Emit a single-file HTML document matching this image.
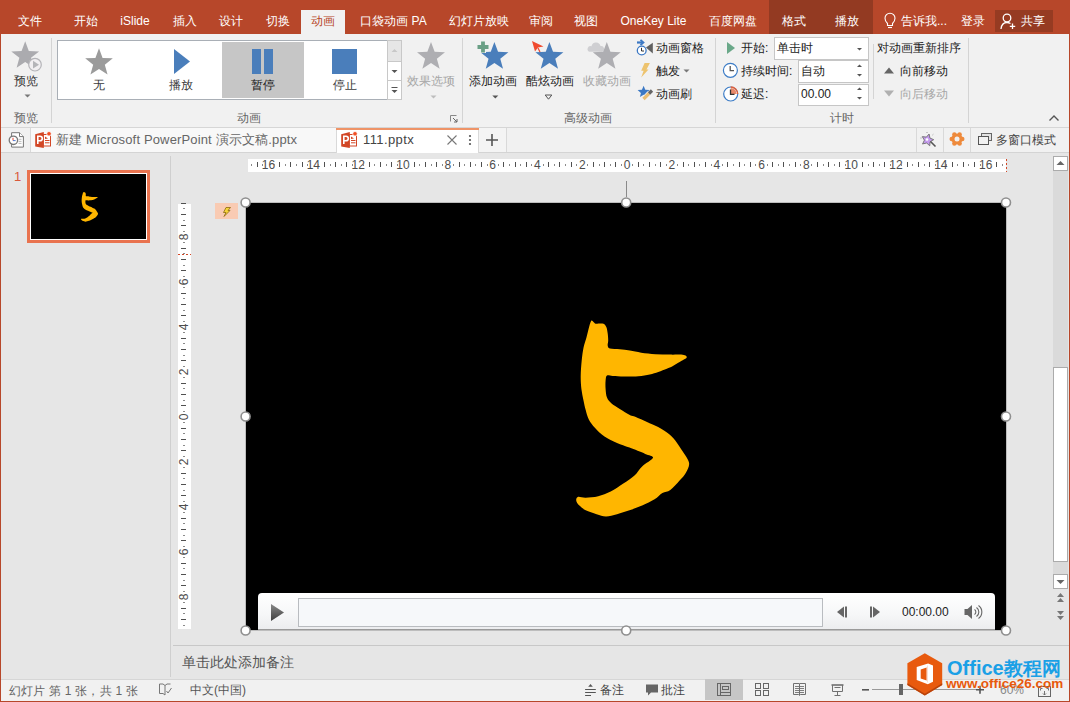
<!DOCTYPE html>
<html><head><meta charset="utf-8"><style>
html,body{margin:0;padding:0;width:1070px;height:702px;overflow:hidden;background:#E6E6E6;font-family:"Liberation Sans",sans-serif;}
.t{position:absolute;white-space:nowrap;line-height:14px;}
.tc{position:absolute;width:120px;text-align:center;white-space:nowrap;font-size:12px;line-height:14px;}
svg{overflow:visible}
</style></head><body>
<div style="position:absolute;left:0;top:0;width:1070px;height:34px;background:#B7472A"></div>
<div style="position:absolute;left:769px;top:0;width:104px;height:34px;background:#933A22"></div>
<div style="position:absolute;left:301px;top:10px;width:44px;height:24px;background:#F1F1F1"></div>
<div style="position:absolute;left:995px;top:10px;width:58px;height:22px;background:#963B22"></div>
<div class="tc" style="left:-30px;top:14px;color:#FFFFFF">文件</div>
<div class="tc" style="left:26px;top:14px;color:#FFFFFF">开始</div>
<div class="tc" style="left:75px;top:14px;color:#FFFFFF">iSlide</div>
<div class="tc" style="left:125px;top:14px;color:#FFFFFF">插入</div>
<div class="tc" style="left:171px;top:14px;color:#FFFFFF">设计</div>
<div class="tc" style="left:217.5px;top:14px;color:#FFFFFF">切换</div>
<div class="tc" style="left:262.5px;top:14px;color:#B7472A">动画</div>
<div class="tc" style="left:333.5px;top:14px;color:#FFFFFF">口袋动画 PA</div>
<div class="tc" style="left:418.5px;top:14px;color:#FFFFFF">幻灯片放映</div>
<div class="tc" style="left:481px;top:14px;color:#FFFFFF">审阅</div>
<div class="tc" style="left:526px;top:14px;color:#FFFFFF">视图</div>
<div class="tc" style="left:593.5px;top:14px;color:#FFFFFF">OneKey Lite</div>
<div class="tc" style="left:672.5px;top:14px;color:#FFFFFF">百度网盘</div>
<div class="tc" style="left:733.5px;top:14px;color:#FFFFFF">格式</div>
<div class="tc" style="left:786.5px;top:14px;color:#FFFFFF">播放</div>
<div class="tc" style="left:864px;top:14px;color:#FFFFFF">告诉我...</div>
<div class="tc" style="left:912.5px;top:14px;color:#FFFFFF">登录</div>
<div class="tc" style="left:972.5px;top:14px;color:#FFFFFF">共享</div>
<svg style="position:absolute;left:884px;top:12px" width="12" height="18" viewBox="0 0 12 18"><path d="M3.5 11.5 C2 10 1 8.5 1 6.2 A5 5 0 0 1 11 6.2 C11 8.5 10 10 8.5 11.5 L8.5 13.5 L3.5 13.5 Z" fill="none" stroke="#fff" stroke-width="1.1"/><path d="M4 15.5 H8" stroke="#fff" stroke-width="1.1"/></svg>
<svg style="position:absolute;left:1000px;top:13px" width="16" height="17" viewBox="0 0 16 17"><circle cx="7" cy="5" r="3.8" fill="none" stroke="#fff" stroke-width="1.3"/><path d="M1 16 C1.5 11.5 4 9.5 7 9.5 C8.5 9.5 9.5 10 10.5 10.5" fill="none" stroke="#fff" stroke-width="1.3"/><path d="M12.5 10.5 V16 M9.8 13.3 H15.2" stroke="#fff" stroke-width="1.3"/></svg>
<div style="position:absolute;left:1px;top:34px;width:1068px;height:93px;background:#F1F1F1"></div>
<div style="position:absolute;left:1px;top:127px;width:1068px;height:1px;background:#D6D6D6"></div>
<div style="position:absolute;left:51px;top:38px;width:1px;height:85px;background:#D4D4D4"></div>
<div style="position:absolute;left:462px;top:38px;width:1px;height:85px;background:#D4D4D4"></div>
<div style="position:absolute;left:715px;top:38px;width:1px;height:85px;background:#D4D4D4"></div>
<div style="position:absolute;left:968px;top:38px;width:1px;height:85px;background:#D4D4D4"></div>
<div style="position:absolute;left:873px;top:44px;width:1px;height:55px;background:#D4D4D4"></div>
<svg style="position:absolute;left:0;top:34px" width="50" height="70"><polygon points="25.20,7.30 28.80,16.94 39.09,17.39 31.03,23.79 33.78,33.71 25.20,28.03 16.62,33.71 19.37,23.79 11.31,17.39 21.60,16.94" fill="#ABABAF"/><circle cx="35" cy="30.7" r="6.3" fill="#F1EEF1" stroke="#B4B4B8" stroke-width="1.2"/><polygon points="33,26.8 33,34.6 39,30.7" fill="#B4B4B8"/><polygon points="24.5,60.5 30.5,60.5 27.5,63.5" fill="#777"/></svg>
<div class="tc" style="left:-34px;top:74px;color:#333">预览</div>
<div class="tc" style="left:-34px;top:111px;color:#666">预览</div>
<div style="position:absolute;left:57px;top:40px;width:330px;height:58px;background:#fff;border:1px solid #A9AFB6"></div>
<div style="position:absolute;left:222px;top:42px;width:82px;height:56px;background:#C6C6C6"></div>
<svg style="position:absolute;left:57px;top:34px" width="340" height="70"><polygon points="42.00,14.30 45.59,23.91 55.84,24.35 47.81,30.74 50.55,40.62 42.00,34.96 33.45,40.62 36.19,30.74 28.16,24.35 38.41,23.91" fill="#9B9B9B"/><polygon points="117,15 117,40 133,27.5" fill="#4A7EBB"/><rect x="195" y="15" width="9" height="25" fill="#4A7EBB"/><rect x="207" y="15" width="9" height="25" fill="#4A7EBB"/><rect x="275" y="15" width="25" height="25" fill="#4A7EBB"/></svg>
<div class="tc" style="left:39px;top:78px;color:#3A3A3A">无</div>
<div class="tc" style="left:121px;top:78px;color:#3A3A3A">播放</div>
<div class="tc" style="left:203px;top:78px;color:#1A1A1A">暂停</div>
<div class="tc" style="left:285px;top:78px;color:#3A3A3A">停止</div>
<div style="position:absolute;left:387px;top:40px;width:15px;height:22px;background:#E6E6E6;border:1px solid #C8C8C8;box-sizing:border-box"></div>
<div style="position:absolute;left:387px;top:61px;width:15px;height:20px;background:#fff;border:1px solid #C8C8C8;box-sizing:border-box"></div>
<div style="position:absolute;left:387px;top:80px;width:15px;height:20px;background:#fff;border:1px solid #C8C8C8;box-sizing:border-box"></div>
<svg style="position:absolute;left:387px;top:40px" width="15" height="60"><polygon points="4.5,12 10.5,12 7.5,9" fill="#C8C8C8"/><polygon points="4.5,30 10.5,30 7.5,33" fill="#555"/><rect x="4.5" y="47" width="6" height="1" fill="#555"/><polygon points="4.5,50 10.5,50 7.5,53" fill="#555"/></svg>
<div class="tc" style="left:189px;top:111px;color:#666">动画</div>
<svg style="position:absolute;left:410px;top:34px" width="45" height="70"><polygon points="21.00,8.10 24.63,17.81 34.98,18.26 26.87,24.71 29.64,34.69 21.00,28.97 12.36,34.69 15.13,24.71 7.02,18.26 17.37,17.81" fill="#AEAEB2"/><polygon points="20.5,61.5 26.5,61.5 23.5,64.5" fill="#BDBDBD"/></svg>
<div class="tc" style="left:371px;top:74px;color:#A6A6A6">效果选项</div>
<svg style="position:absolute;left:449px;top:114px" width="10" height="10"><path d="M1.5 7.5 V1.5 H7.5" fill="none" stroke="#888" stroke-width="1"/><path d="M4 4 L8 8 M8 5 V8 H5" fill="none" stroke="#666" stroke-width="1"/></svg>
<svg style="position:absolute;left:465px;top:34px" width="60" height="70"><polygon points="29.40,8.10 33.03,17.81 43.38,18.26 35.27,24.71 38.04,34.69 29.40,28.97 20.76,34.69 23.53,24.71 15.42,18.26 25.77,17.81" fill="#4A7EBB"/><path d="M18 7 V19 M12 13 H24" stroke="#F1F1F1" stroke-width="6"/><path d="M18 7.5 V18.5 M12.5 13 H23.5" stroke="#6A9F85" stroke-width="3.8"/><polygon points="27.3,61.5 33.3,61.5 30.3,64.5" fill="#555"/></svg>
<div class="tc" style="left:432.5px;top:74px;color:#222">添加动画</div>
<svg style="position:absolute;left:520px;top:34px" width="60" height="70"><polygon points="29.40,8.10 33.03,17.81 43.38,18.26 35.27,24.71 38.04,34.69 29.40,28.97 20.76,34.69 23.53,24.71 15.42,18.26 25.77,17.81" fill="#4A7EBB"/><path d="M12 7 L23.5 12.5 L18 13.5 L15 17.5 Z" fill="#F04A2E"/><path d="M18 14 L20 18" stroke="#F04A2E" stroke-width="1.3"/><path d="M25.2 61 H31.8 L28.5 65.2 Z" fill="none" stroke="#555" stroke-width="1"/></svg>
<div class="tc" style="left:489.5px;top:74px;color:#222">酷炫动画</div>
<svg style="position:absolute;left:580px;top:34px" width="55" height="40"><path d="M9.5 17.8 A2.8 2.8 0 0 1 11.5 12.3 A4.6 4.6 0 0 1 20.5 12 A3 3 0 0 1 22 17.8 Z" fill="#CFCFD2"/><polygon points="26.80,8.10 30.43,17.81 40.78,18.26 32.67,24.71 35.44,34.69 26.80,28.97 18.16,34.69 20.93,24.71 12.82,18.26 23.17,17.81" fill="#AEAEB2"/></svg>
<div class="tc" style="left:546.5px;top:74px;color:#A6A6A6">收藏动画</div>
<svg style="position:absolute;left:632px;top:36px" width="24" height="68"><path d="M5 6.5 H10.5" stroke="#3B78C4" stroke-width="2.2"/><path d="M8.5 3.8 L11.5 6.5 L8.5 9.2" fill="none" stroke="#3B78C4" stroke-width="1.8"/><circle cx="9.7" cy="14.5" r="4.4" fill="#fff" stroke="#3B78C4" stroke-width="1.3"/><path d="M9.5 11.8 V15 H12" fill="none" stroke="#333" stroke-width="1"/><polygon points="14,11.6 20.8,6.8 20.8,17.4" fill="#606060"/><polygon points="12.6,27.1 17.9,27.1 14.5,33.4 16.5,33.4 9.2,41.6 11.6,34.8 9.2,34.8" fill="#EDC36E"/><polygon points="11.60,49.70 13.27,53.71 17.59,54.05 14.30,56.88 15.30,61.10 11.60,58.84 7.90,61.10 8.90,56.88 5.61,54.05 9.93,53.71" fill="#3B78C4"/><path d="M11.5 63 L17.5 57" stroke="#F1F1F1" stroke-width="5"/><path d="M11.5 63 L17 57.5" stroke="#E9BE74" stroke-width="3.2"/><path d="M17 57.5 L20 54.5" stroke="#666" stroke-width="3.2"/></svg>
<div class="t" style="left:656px;top:41px;font-size:12px;color:#222;">动画窗格</div>
<div class="t" style="left:656px;top:64px;font-size:12px;color:#222;">触发</div>
<svg style="position:absolute;left:683px;top:69px" width="8" height="5"><polygon points="0.5,0.5 6.5,0.5 3.5,3.5" fill="#777"/></svg>
<div class="t" style="left:656px;top:87px;font-size:12px;color:#222;">动画刷</div>
<div class="tc" style="left:528px;top:111px;color:#666">高级动画</div>
<svg style="position:absolute;left:720px;top:38px" width="20" height="66"><polygon points="7,4 7,16 15,10" fill="#6AA889"/><circle cx="10.4" cy="32.3" r="7" fill="#fff" stroke="#3C7CC6" stroke-width="1.2"/><path d="M10.2 28 V32.6 H14" fill="none" stroke="#555" stroke-width="1.3"/><circle cx="10.7" cy="56" r="7" fill="#fff" stroke="#3C7CC6" stroke-width="1.2"/><path d="M10.7 56 V50 A6 6 0 0 1 16.7 56 Z" fill="#E8896A"/><path d="M10.7 49 A7 7 0 0 1 17.7 56" fill="none" stroke="#E0603A" stroke-width="1.3"/><path d="M10.5 51.5 V56.3 H14.5" fill="none" stroke="#333" stroke-width="1.3"/></svg>
<div class="t" style="left:741px;top:41px;font-size:12px;color:#222;">开始:</div>
<div class="t" style="left:741px;top:64px;font-size:12px;color:#222;">持续时间:</div>
<div class="t" style="left:741px;top:87px;font-size:12px;color:#222;">延迟:</div>
<div style="position:absolute;left:774px;top:37px;width:95px;height:23px;box-sizing:border-box;background:#fff;border:1px solid #C6C6C6"></div>
<div style="position:absolute;left:798px;top:60px;width:71px;height:23px;box-sizing:border-box;background:#fff;border:1px solid #C6C6C6"></div>
<div style="position:absolute;left:798px;top:84px;width:71px;height:22px;box-sizing:border-box;background:#fff;border:1px solid #C6C6C6"></div>
<div class="t" style="left:777px;top:41px;font-size:12px;color:#222;">单击时</div>
<div class="t" style="left:801px;top:64px;font-size:12px;color:#222;">自动</div>
<div class="t" style="left:801px;top:87px;font-size:12px;color:#222;">00.00</div>
<svg style="position:absolute;left:855px;top:44px" width="10" height="60"><polygon points="2,4 7,4 4.5,6.5" fill="#555"/><polygon points="2,23 7,23 4.5,20.5" fill="#555"/><polygon points="2,30 7,30 4.5,32.5" fill="#555"/><polygon points="2,46 7,46 4.5,43.5" fill="#555"/><polygon points="2,53 7,53 4.5,55.5" fill="#555"/></svg>
<div class="tc" style="left:782px;top:111px;color:#666">计时</div>
<div class="t" style="left:877px;top:41px;font-size:12px;color:#222;">对动画重新排序</div>
<svg style="position:absolute;left:882px;top:64px" width="14" height="36"><polygon points="2,9.5 12,9.5 7,3.5" fill="#666"/><polygon points="2,26.5 12,26.5 7,32.5" fill="#B0B0B0"/></svg>
<div class="t" style="left:900px;top:64px;font-size:12px;color:#222;">向前移动</div>
<div class="t" style="left:900px;top:87px;font-size:12px;color:#A6A6A6;">向后移动</div>
<svg style="position:absolute;left:1048px;top:114px" width="12" height="8"><path d="M1.5 6.5 L6 2 L10.5 6.5" fill="none" stroke="#555" stroke-width="1.4"/></svg>
<div style="position:absolute;left:1px;top:128px;width:1068px;height:24px;background:#F1F1F1"></div>
<div style="position:absolute;left:31px;top:128px;width:305px;height:24px;background:#F8F8F8"></div>
<div style="position:absolute;left:479px;top:128px;width:27px;height:24px;background:#F4F4F4"></div>
<div style="position:absolute;left:1px;top:152px;width:1068px;height:1px;background:#D4D4D4"></div>
<div style="position:absolute;left:30px;top:128px;width:1px;height:24px;background:#D9D9D9"></div>
<div style="position:absolute;left:506px;top:128px;width:1px;height:24px;background:#D9D9D9"></div>
<div style="position:absolute;left:916px;top:128px;width:1px;height:24px;background:#D9D9D9"></div>
<div style="position:absolute;left:943px;top:128px;width:1px;height:24px;background:#D9D9D9"></div>
<div style="position:absolute;left:970px;top:128px;width:1px;height:24px;background:#D9D9D9"></div>
<div style="position:absolute;left:336px;top:128px;width:143px;height:25px;background:#FFFFFF;border-left:1px solid #D9D9D9;border-right:1px solid #D9D9D9;box-sizing:border-box"></div>
<div style="position:absolute;left:336px;top:128px;width:143px;height:2px;background:#EF9468"></div>
<svg style="position:absolute;left:34px;top:131px" width="18" height="17" viewBox="0 0 18 17"><rect x="9.2" y="3.5" width="7.3" height="11.5" fill="#fff" stroke="#D24726" stroke-width="1"/><path d="M11 9.5 H15.5 M11 11.8 H15.5" stroke="#D24726" stroke-width="1"/><path d="M11 5.5 L14 7.5 L11 8" fill="#D24726"/><path d="M1.2 3.3 L9.8 0.9 V16.9 L1.2 15.6 Z" fill="#D24726"/><path d="M3.8 13 V5.2 H6 A2.3 2.3 0 0 1 6 9.8 H3.8" fill="none" stroke="#fff" stroke-width="1.6"/><circle cx="15" cy="2.8" r="2.3" fill="#F04E23" stroke="#fff" stroke-width="0.8"/></svg>
<svg style="position:absolute;left:340px;top:131px" width="18" height="17" viewBox="0 0 18 17"><rect x="9.2" y="3.5" width="7.3" height="11.5" fill="#fff" stroke="#D24726" stroke-width="1"/><path d="M11 9.5 H15.5 M11 11.8 H15.5" stroke="#D24726" stroke-width="1"/><path d="M11 5.5 L14 7.5 L11 8" fill="#D24726"/><path d="M1.2 3.3 L9.8 0.9 V16.9 L1.2 15.6 Z" fill="#D24726"/><path d="M3.8 13 V5.2 H6 A2.3 2.3 0 0 1 6 9.8 H3.8" fill="none" stroke="#fff" stroke-width="1.6"/><circle cx="15" cy="2.8" r="2.3" fill="#F04E23" stroke="#fff" stroke-width="0.8"/></svg>
<svg style="position:absolute;left:8px;top:131px" width="18" height="18" viewBox="0 0 18 18"><path d="M3.6 1.7 H11.5 L15.4 5.6 V16.1 H3.6 Z" fill="#fff" stroke="#777" stroke-width="1"/><path d="M11.5 1.7 V5.6 H15.4" fill="#fff" stroke="#777" stroke-width="1"/><path d="M10.5 8.3 H13.5 M10.5 10.4 H13.5 M10.5 12.4 H13.5" stroke="#AAA" stroke-width="0.8"/><circle cx="5.4" cy="9.3" r="4.2" fill="#fff" stroke="#777" stroke-width="1.3"/><path d="M5 6.8 V9.6" stroke="#E0301E" stroke-width="0.9"/><path d="M5 9.6 H7.6" stroke="#3B6FD0" stroke-width="0.9"/></svg>
<div class="t" style="left:56px;top:133px;font-size:13px;color:#666;letter-spacing:0.15px">新建 Microsoft PowerPoint 演示文稿.pptx</div>
<div class="t" style="left:363px;top:133px;font-size:13px;color:#444;letter-spacing:0.4px">111.pptx</div>
<svg style="position:absolute;left:446px;top:134px" width="30" height="12"><path d="M1.5 1.5 L10.5 10.5 M10.5 1.5 L1.5 10.5" stroke="#777" stroke-width="1.1"/><circle cx="24" cy="2" r="1.1" fill="#555"/><circle cx="24" cy="6" r="1.1" fill="#555"/><circle cx="24" cy="10" r="1.1" fill="#555"/></svg>
<svg style="position:absolute;left:485px;top:133px" width="14" height="14"><path d="M7 1 V13 M1 7 H13" stroke="#555" stroke-width="1.6"/></svg>
<svg style="position:absolute;left:920px;top:131px" width="18" height="18"><polygon points="9.10,3.01 9.91,7.05 13.69,8.68 10.10,10.69 9.72,14.79 6.70,11.99 2.68,12.90 4.40,9.16 2.30,5.62 6.39,6.11" fill="#C59BEF" stroke="#6E6E6E" stroke-width="0.9" stroke-linejoin="round"/><circle cx="7" cy="8.5" r="1.3" fill="#fff"/><path d="M10.5 10.5 L15.5 15.5" stroke="#555" stroke-width="1.6"/><path d="M7 1 V2 M12.5 4 L13.3 3.3 M0.5 7 H1.5 M2 13 L3 12.5" stroke="#888" stroke-width="0.8"/></svg>
<svg style="position:absolute;left:949px;top:131px" width="16" height="16"><circle cx="8" cy="8" r="5.6" fill="#EE8A3C"/><circle cx="13.30" cy="8.00" r="2.2" fill="#EE8A3C"/><circle cx="10.65" cy="12.59" r="2.2" fill="#EE8A3C"/><circle cx="5.35" cy="12.59" r="2.2" fill="#EE8A3C"/><circle cx="2.70" cy="8.00" r="2.2" fill="#EE8A3C"/><circle cx="5.35" cy="3.41" r="2.2" fill="#EE8A3C"/><circle cx="10.65" cy="3.41" r="2.2" fill="#EE8A3C"/><circle cx="8" cy="8" r="2.5" fill="#F1F1F1"/></svg>
<svg style="position:absolute;left:977px;top:132px" width="16" height="14"><rect x="4.5" y="1.5" width="10" height="7" fill="#E2E2E2" stroke="#666" stroke-width="1"/><rect x="1.5" y="4.5" width="10" height="8" fill="#F1F1F1" stroke="#555" stroke-width="1"/></svg>
<div class="t" style="left:996px;top:133px;font-size:12px;color:#444;">多窗口模式</div>
<div style="position:absolute;left:1px;top:153px;width:1068px;height:525px;background:#E6E6E6"></div>
<div style="position:absolute;left:170px;top:156px;width:1px;height:521px;background:#CFCFCF"></div>
<div style="position:absolute;left:173px;top:645px;width:896px;height:1px;background:#C8C8C8"></div>
<div style="position:absolute;left:27px;top:170px;width:123px;height:73px;background:#E9734F"></div>
<div style="position:absolute;left:30px;top:173px;width:117px;height:67px;background:#fff"></div>
<div style="position:absolute;left:31px;top:174px;width:115px;height:65px;background:#000"></div>
<div class="t" style="left:14px;top:170px;font-size:13px;color:#D9583B;">1</div>
<div style="position:absolute;left:248px;top:159px;width:758px;height:13px;background:#fff"></div>
<div style="position:absolute;left:178px;top:204px;width:13px;height:425px;background:#fff"></div>
<svg style="position:absolute;left:0;top:0" width="1070" height="702"><rect x="251" y="164" width="1" height="2" fill="#8A8A8A"/><rect x="257" y="162" width="1" height="5" fill="#505050"/><rect x="262" y="164" width="1" height="2" fill="#8A8A8A"/><text x="268.54" y="168.6" font-size="12" fill="#4D4D4D" text-anchor="middle" font-family="Liberation Sans">16</text><rect x="274" y="164" width="1" height="2" fill="#8A8A8A"/><rect x="279" y="162" width="1" height="5" fill="#505050"/><rect x="285" y="164" width="1" height="2" fill="#8A8A8A"/><rect x="290" y="162" width="1" height="5" fill="#505050"/><rect x="296" y="164" width="1" height="2" fill="#8A8A8A"/><rect x="302" y="162" width="1" height="5" fill="#505050"/><rect x="307" y="164" width="1" height="2" fill="#8A8A8A"/><text x="313.36" y="168.6" font-size="12" fill="#4D4D4D" text-anchor="middle" font-family="Liberation Sans">14</text><rect x="318" y="164" width="1" height="2" fill="#8A8A8A"/><rect x="324" y="162" width="1" height="5" fill="#505050"/><rect x="330" y="164" width="1" height="2" fill="#8A8A8A"/><rect x="335" y="162" width="1" height="5" fill="#505050"/><rect x="341" y="164" width="1" height="2" fill="#8A8A8A"/><rect x="346" y="162" width="1" height="5" fill="#505050"/><rect x="352" y="164" width="1" height="2" fill="#8A8A8A"/><text x="358.18" y="168.6" font-size="12" fill="#4D4D4D" text-anchor="middle" font-family="Liberation Sans">12</text><rect x="363" y="164" width="1" height="2" fill="#8A8A8A"/><rect x="369" y="162" width="1" height="5" fill="#505050"/><rect x="374" y="164" width="1" height="2" fill="#8A8A8A"/><rect x="380" y="162" width="1" height="5" fill="#505050"/><rect x="386" y="164" width="1" height="2" fill="#8A8A8A"/><rect x="391" y="162" width="1" height="5" fill="#505050"/><rect x="397" y="164" width="1" height="2" fill="#8A8A8A"/><text x="403.00" y="168.6" font-size="12" fill="#4D4D4D" text-anchor="middle" font-family="Liberation Sans">10</text><rect x="408" y="164" width="1" height="2" fill="#8A8A8A"/><rect x="414" y="162" width="1" height="5" fill="#505050"/><rect x="419" y="164" width="1" height="2" fill="#8A8A8A"/><rect x="425" y="162" width="1" height="5" fill="#505050"/><rect x="431" y="164" width="1" height="2" fill="#8A8A8A"/><rect x="436" y="162" width="1" height="5" fill="#505050"/><rect x="442" y="164" width="1" height="2" fill="#8A8A8A"/><text x="447.82" y="168.6" font-size="12" fill="#4D4D4D" text-anchor="middle" font-family="Liberation Sans">8</text><rect x="453" y="164" width="1" height="2" fill="#8A8A8A"/><rect x="459" y="162" width="1" height="5" fill="#505050"/><rect x="464" y="164" width="1" height="2" fill="#8A8A8A"/><rect x="470" y="162" width="1" height="5" fill="#505050"/><rect x="475" y="164" width="1" height="2" fill="#8A8A8A"/><rect x="481" y="162" width="1" height="5" fill="#505050"/><rect x="487" y="164" width="1" height="2" fill="#8A8A8A"/><text x="492.64" y="168.6" font-size="12" fill="#4D4D4D" text-anchor="middle" font-family="Liberation Sans">6</text><rect x="498" y="164" width="1" height="2" fill="#8A8A8A"/><rect x="503" y="162" width="1" height="5" fill="#505050"/><rect x="509" y="164" width="1" height="2" fill="#8A8A8A"/><rect x="515" y="162" width="1" height="5" fill="#505050"/><rect x="520" y="164" width="1" height="2" fill="#8A8A8A"/><rect x="526" y="162" width="1" height="5" fill="#505050"/><rect x="531" y="164" width="1" height="2" fill="#8A8A8A"/><text x="537.46" y="168.6" font-size="12" fill="#4D4D4D" text-anchor="middle" font-family="Liberation Sans">4</text><rect x="543" y="164" width="1" height="2" fill="#8A8A8A"/><rect x="548" y="162" width="1" height="5" fill="#505050"/><rect x="554" y="164" width="1" height="2" fill="#8A8A8A"/><rect x="559" y="162" width="1" height="5" fill="#505050"/><rect x="565" y="164" width="1" height="2" fill="#8A8A8A"/><rect x="571" y="162" width="1" height="5" fill="#505050"/><rect x="576" y="164" width="1" height="2" fill="#8A8A8A"/><text x="582.28" y="168.6" font-size="12" fill="#4D4D4D" text-anchor="middle" font-family="Liberation Sans">2</text><rect x="587" y="164" width="1" height="2" fill="#8A8A8A"/><rect x="593" y="162" width="1" height="5" fill="#505050"/><rect x="599" y="164" width="1" height="2" fill="#8A8A8A"/><rect x="604" y="162" width="1" height="5" fill="#505050"/><rect x="610" y="164" width="1" height="2" fill="#8A8A8A"/><rect x="615" y="162" width="1" height="5" fill="#505050"/><rect x="621" y="164" width="1" height="2" fill="#8A8A8A"/><text x="627.10" y="168.6" font-size="12" fill="#4D4D4D" text-anchor="middle" font-family="Liberation Sans">0</text><rect x="632" y="164" width="1" height="2" fill="#8A8A8A"/><rect x="638" y="162" width="1" height="5" fill="#505050"/><rect x="643" y="164" width="1" height="2" fill="#8A8A8A"/><rect x="649" y="162" width="1" height="5" fill="#505050"/><rect x="655" y="164" width="1" height="2" fill="#8A8A8A"/><rect x="660" y="162" width="1" height="5" fill="#505050"/><rect x="666" y="164" width="1" height="2" fill="#8A8A8A"/><text x="671.92" y="168.6" font-size="12" fill="#4D4D4D" text-anchor="middle" font-family="Liberation Sans">2</text><rect x="677" y="164" width="1" height="2" fill="#8A8A8A"/><rect x="683" y="162" width="1" height="5" fill="#505050"/><rect x="688" y="164" width="1" height="2" fill="#8A8A8A"/><rect x="694" y="162" width="1" height="5" fill="#505050"/><rect x="699" y="164" width="1" height="2" fill="#8A8A8A"/><rect x="705" y="162" width="1" height="5" fill="#505050"/><rect x="711" y="164" width="1" height="2" fill="#8A8A8A"/><text x="716.74" y="168.6" font-size="12" fill="#4D4D4D" text-anchor="middle" font-family="Liberation Sans">4</text><rect x="722" y="164" width="1" height="2" fill="#8A8A8A"/><rect x="727" y="162" width="1" height="5" fill="#505050"/><rect x="733" y="164" width="1" height="2" fill="#8A8A8A"/><rect x="739" y="162" width="1" height="5" fill="#505050"/><rect x="744" y="164" width="1" height="2" fill="#8A8A8A"/><rect x="750" y="162" width="1" height="5" fill="#505050"/><rect x="755" y="164" width="1" height="2" fill="#8A8A8A"/><text x="761.56" y="168.6" font-size="12" fill="#4D4D4D" text-anchor="middle" font-family="Liberation Sans">6</text><rect x="767" y="164" width="1" height="2" fill="#8A8A8A"/><rect x="772" y="162" width="1" height="5" fill="#505050"/><rect x="778" y="164" width="1" height="2" fill="#8A8A8A"/><rect x="783" y="162" width="1" height="5" fill="#505050"/><rect x="789" y="164" width="1" height="2" fill="#8A8A8A"/><rect x="795" y="162" width="1" height="5" fill="#505050"/><rect x="800" y="164" width="1" height="2" fill="#8A8A8A"/><text x="806.38" y="168.6" font-size="12" fill="#4D4D4D" text-anchor="middle" font-family="Liberation Sans">8</text><rect x="811" y="164" width="1" height="2" fill="#8A8A8A"/><rect x="817" y="162" width="1" height="5" fill="#505050"/><rect x="823" y="164" width="1" height="2" fill="#8A8A8A"/><rect x="828" y="162" width="1" height="5" fill="#505050"/><rect x="834" y="164" width="1" height="2" fill="#8A8A8A"/><rect x="839" y="162" width="1" height="5" fill="#505050"/><rect x="845" y="164" width="1" height="2" fill="#8A8A8A"/><text x="851.20" y="168.6" font-size="12" fill="#4D4D4D" text-anchor="middle" font-family="Liberation Sans">10</text><rect x="856" y="164" width="1" height="2" fill="#8A8A8A"/><rect x="862" y="162" width="1" height="5" fill="#505050"/><rect x="868" y="164" width="1" height="2" fill="#8A8A8A"/><rect x="873" y="162" width="1" height="5" fill="#505050"/><rect x="879" y="164" width="1" height="2" fill="#8A8A8A"/><rect x="884" y="162" width="1" height="5" fill="#505050"/><rect x="890" y="164" width="1" height="2" fill="#8A8A8A"/><text x="896.02" y="168.6" font-size="12" fill="#4D4D4D" text-anchor="middle" font-family="Liberation Sans">12</text><rect x="901" y="164" width="1" height="2" fill="#8A8A8A"/><rect x="907" y="162" width="1" height="5" fill="#505050"/><rect x="912" y="164" width="1" height="2" fill="#8A8A8A"/><rect x="918" y="162" width="1" height="5" fill="#505050"/><rect x="924" y="164" width="1" height="2" fill="#8A8A8A"/><rect x="929" y="162" width="1" height="5" fill="#505050"/><rect x="935" y="164" width="1" height="2" fill="#8A8A8A"/><text x="940.84" y="168.6" font-size="12" fill="#4D4D4D" text-anchor="middle" font-family="Liberation Sans">14</text><rect x="946" y="164" width="1" height="2" fill="#8A8A8A"/><rect x="952" y="162" width="1" height="5" fill="#505050"/><rect x="957" y="164" width="1" height="2" fill="#8A8A8A"/><rect x="963" y="162" width="1" height="5" fill="#505050"/><rect x="968" y="164" width="1" height="2" fill="#8A8A8A"/><rect x="974" y="162" width="1" height="5" fill="#505050"/><rect x="980" y="164" width="1" height="2" fill="#8A8A8A"/><text x="985.66" y="168.6" font-size="12" fill="#4D4D4D" text-anchor="middle" font-family="Liberation Sans">16</text><rect x="991" y="164" width="1" height="2" fill="#8A8A8A"/><rect x="996" y="162" width="1" height="5" fill="#505050"/><rect x="1002" y="164" width="1" height="2" fill="#8A8A8A"/><rect x="181" y="203" width="5" height="1" fill="#505050"/><rect x="183" y="208" width="2" height="1" fill="#8A8A8A"/><rect x="181" y="214" width="5" height="1" fill="#505050"/><rect x="183" y="220" width="2" height="1" fill="#8A8A8A"/><rect x="181" y="225" width="5" height="1" fill="#505050"/><rect x="183" y="231" width="2" height="1" fill="#8A8A8A"/><text x="0" y="0" font-size="12" fill="#4D4D4D" text-anchor="middle" font-family="Liberation Sans" transform="translate(187.8,237.00) rotate(-90)">8</text><rect x="183" y="242" width="2" height="1" fill="#8A8A8A"/><rect x="181" y="248" width="5" height="1" fill="#505050"/><rect x="183" y="253" width="2" height="1" fill="#8A8A8A"/><rect x="181" y="259" width="5" height="1" fill="#505050"/><rect x="183" y="265" width="2" height="1" fill="#8A8A8A"/><rect x="181" y="270" width="5" height="1" fill="#505050"/><rect x="183" y="276" width="2" height="1" fill="#8A8A8A"/><text x="0" y="0" font-size="12" fill="#4D4D4D" text-anchor="middle" font-family="Liberation Sans" transform="translate(187.8,282.00) rotate(-90)">6</text><rect x="183" y="287" width="2" height="1" fill="#8A8A8A"/><rect x="181" y="293" width="5" height="1" fill="#505050"/><rect x="183" y="298" width="2" height="1" fill="#8A8A8A"/><rect x="181" y="304" width="5" height="1" fill="#505050"/><rect x="183" y="310" width="2" height="1" fill="#8A8A8A"/><rect x="181" y="315" width="5" height="1" fill="#505050"/><rect x="183" y="321" width="2" height="1" fill="#8A8A8A"/><text x="0" y="0" font-size="12" fill="#4D4D4D" text-anchor="middle" font-family="Liberation Sans" transform="translate(187.8,327.00) rotate(-90)">4</text><rect x="183" y="332" width="2" height="1" fill="#8A8A8A"/><rect x="181" y="338" width="5" height="1" fill="#505050"/><rect x="183" y="343" width="2" height="1" fill="#8A8A8A"/><rect x="181" y="349" width="5" height="1" fill="#505050"/><rect x="183" y="355" width="2" height="1" fill="#8A8A8A"/><rect x="181" y="360" width="5" height="1" fill="#505050"/><rect x="183" y="366" width="2" height="1" fill="#8A8A8A"/><text x="0" y="0" font-size="12" fill="#4D4D4D" text-anchor="middle" font-family="Liberation Sans" transform="translate(187.8,372.00) rotate(-90)">2</text><rect x="183" y="377" width="2" height="1" fill="#8A8A8A"/><rect x="181" y="383" width="5" height="1" fill="#505050"/><rect x="183" y="388" width="2" height="1" fill="#8A8A8A"/><rect x="181" y="394" width="5" height="1" fill="#505050"/><rect x="183" y="400" width="2" height="1" fill="#8A8A8A"/><rect x="181" y="405" width="5" height="1" fill="#505050"/><rect x="183" y="411" width="2" height="1" fill="#8A8A8A"/><text x="0" y="0" font-size="12" fill="#4D4D4D" text-anchor="middle" font-family="Liberation Sans" transform="translate(187.8,417.00) rotate(-90)">0</text><rect x="183" y="422" width="2" height="1" fill="#8A8A8A"/><rect x="181" y="428" width="5" height="1" fill="#505050"/><rect x="183" y="433" width="2" height="1" fill="#8A8A8A"/><rect x="181" y="439" width="5" height="1" fill="#505050"/><rect x="183" y="445" width="2" height="1" fill="#8A8A8A"/><rect x="181" y="450" width="5" height="1" fill="#505050"/><rect x="183" y="456" width="2" height="1" fill="#8A8A8A"/><text x="0" y="0" font-size="12" fill="#4D4D4D" text-anchor="middle" font-family="Liberation Sans" transform="translate(187.8,462.00) rotate(-90)">2</text><rect x="183" y="467" width="2" height="1" fill="#8A8A8A"/><rect x="181" y="473" width="5" height="1" fill="#505050"/><rect x="183" y="478" width="2" height="1" fill="#8A8A8A"/><rect x="181" y="484" width="5" height="1" fill="#505050"/><rect x="183" y="490" width="2" height="1" fill="#8A8A8A"/><rect x="181" y="495" width="5" height="1" fill="#505050"/><rect x="183" y="501" width="2" height="1" fill="#8A8A8A"/><text x="0" y="0" font-size="12" fill="#4D4D4D" text-anchor="middle" font-family="Liberation Sans" transform="translate(187.8,507.00) rotate(-90)">4</text><rect x="183" y="512" width="2" height="1" fill="#8A8A8A"/><rect x="181" y="518" width="5" height="1" fill="#505050"/><rect x="183" y="523" width="2" height="1" fill="#8A8A8A"/><rect x="181" y="529" width="5" height="1" fill="#505050"/><rect x="183" y="535" width="2" height="1" fill="#8A8A8A"/><rect x="181" y="540" width="5" height="1" fill="#505050"/><rect x="183" y="546" width="2" height="1" fill="#8A8A8A"/><text x="0" y="0" font-size="12" fill="#4D4D4D" text-anchor="middle" font-family="Liberation Sans" transform="translate(187.8,552.00) rotate(-90)">6</text><rect x="183" y="557" width="2" height="1" fill="#8A8A8A"/><rect x="181" y="563" width="5" height="1" fill="#505050"/><rect x="183" y="568" width="2" height="1" fill="#8A8A8A"/><rect x="181" y="574" width="5" height="1" fill="#505050"/><rect x="183" y="580" width="2" height="1" fill="#8A8A8A"/><rect x="181" y="585" width="5" height="1" fill="#505050"/><rect x="183" y="591" width="2" height="1" fill="#8A8A8A"/><text x="0" y="0" font-size="12" fill="#4D4D4D" text-anchor="middle" font-family="Liberation Sans" transform="translate(187.8,597.00) rotate(-90)">8</text><rect x="183" y="602" width="2" height="1" fill="#8A8A8A"/><rect x="181" y="608" width="5" height="1" fill="#505050"/><rect x="183" y="613" width="2" height="1" fill="#8A8A8A"/><rect x="181" y="619" width="5" height="1" fill="#505050"/><rect x="183" y="625" width="2" height="1" fill="#8A8A8A"/><path d="M1006.5 159 V172" stroke="#D24726" stroke-width="1" stroke-dasharray="2 2"/><path d="M178 254.5 H191" stroke="#D24726" stroke-width="1" stroke-dasharray="2 2"/></svg>
<div style="position:absolute;left:245px;top:202px;width:762px;height:429px;background:#BDBDBD"></div>
<div style="position:absolute;left:246px;top:203px;width:760px;height:427px;background:#000"></div>
<svg style="position:absolute;left:0;top:0" width="1070" height="702"><path d="M591.10 321.00 C591.93 319.82 592.75 321.63 593.50 322.10 C594.25 322.57 594.77 323.57 595.60 323.80 C596.43 324.03 597.18 323.50 598.50 323.50 C599.82 323.50 602.20 323.20 603.50 323.80 C604.80 324.40 605.60 325.48 606.30 327.10 C607.00 328.72 607.38 331.25 607.70 333.50 C608.02 335.75 608.20 338.58 608.20 340.60 C608.20 342.62 607.42 344.28 607.70 345.60 C607.98 346.92 607.88 347.90 609.90 348.50 C611.92 349.10 616.48 348.85 619.80 349.20 C623.12 349.55 626.23 350.02 629.80 350.60 C633.37 351.18 636.93 352.10 641.20 352.70 C645.47 353.30 650.65 353.88 655.40 354.20 C660.15 354.52 664.95 354.48 669.70 354.60 C674.45 354.72 681.07 354.43 683.90 354.90 C686.73 355.37 686.70 356.65 686.70 357.40 C686.70 358.15 685.32 358.52 683.90 359.40 C682.48 360.28 680.10 361.55 678.20 362.70 C676.30 363.85 674.40 365.28 672.50 366.30 C670.60 367.32 669.17 367.85 666.80 368.80 C664.43 369.75 661.15 371.05 658.30 372.00 C655.45 372.95 653.03 373.80 649.70 374.50 C646.37 375.20 642.57 375.87 638.30 376.20 C634.03 376.53 628.37 376.55 624.10 376.50 C619.83 376.45 615.55 376.07 612.70 375.90 C609.85 375.73 608.18 374.73 607.00 375.50 C605.82 376.27 605.83 378.25 605.60 380.50 C605.37 382.75 605.37 386.15 605.60 389.00 C605.83 391.85 606.05 395.22 607.00 397.60 C607.95 399.98 609.17 401.40 611.30 403.30 C613.43 405.20 616.72 407.05 619.80 409.00 C622.88 410.95 627.13 413.67 629.80 415.00 C632.47 416.33 632.18 415.48 635.80 417.00 C639.42 418.52 646.80 421.87 651.50 424.10 C656.20 426.33 660.35 428.05 664.00 430.40 C667.65 432.75 670.53 435.07 673.40 438.20 C676.27 441.33 678.60 445.15 681.20 449.20 C683.80 453.25 688.22 458.58 689.00 462.50 C689.78 466.42 687.47 469.70 685.90 472.70 C684.33 475.70 682.20 477.63 679.60 480.50 C677.00 483.37 673.17 487.82 670.30 489.90 C667.43 491.98 665.02 491.43 662.40 493.00 C659.78 494.57 657.98 497.20 654.60 499.30 C651.22 501.40 646.28 503.77 642.10 505.60 C637.92 507.43 633.68 508.87 629.50 510.30 C625.32 511.73 620.92 513.17 617.00 514.20 C613.08 515.23 609.40 516.50 606.00 516.50 C602.60 516.50 599.98 515.23 596.60 514.20 C593.22 513.17 588.57 511.73 585.70 510.30 C582.83 508.87 580.97 507.17 579.40 505.60 C577.83 504.03 576.57 502.35 576.30 500.90 C576.03 499.45 576.23 497.43 577.80 496.90 C579.37 496.37 582.30 497.82 585.70 497.70 C589.10 497.58 594.03 497.23 598.20 496.20 C602.37 495.17 606.52 493.60 610.70 491.50 C614.88 489.40 619.38 486.22 623.30 483.60 C627.22 480.98 631.07 478.67 634.20 475.80 C637.33 472.93 638.97 469.40 642.10 466.40 C645.23 463.40 652.48 459.88 653.00 457.80 C653.52 455.72 649.12 455.60 645.20 453.90 C641.28 452.20 634.20 449.43 629.50 447.60 C624.80 445.77 621.17 444.73 617.00 442.90 C612.83 441.07 608.15 439.08 604.50 436.60 C600.85 434.12 597.72 430.87 595.10 428.00 C592.48 425.13 590.37 422.40 588.80 419.40 C587.23 416.40 586.58 413.17 585.70 410.00 C584.82 406.83 584.22 403.90 583.50 400.40 C582.78 396.90 581.87 393.03 581.40 389.00 C580.93 384.97 580.65 380.93 580.70 376.20 C580.75 371.47 581.23 365.35 581.70 360.60 C582.17 355.85 582.72 351.50 583.50 347.70 C584.28 343.90 585.57 340.88 586.40 337.80 C587.23 334.72 587.72 332.00 588.50 329.20 C589.28 326.40 590.27 322.18 591.10 321.00 Z" fill="#FFB600"/></svg>
<svg style="position:absolute;left:0;top:0" width="200" height="260"><path d="M83.22 191.96 C83.35 191.78 83.47 192.06 83.58 192.13 C83.70 192.20 83.77 192.35 83.90 192.39 C84.03 192.42 84.14 192.34 84.34 192.34 C84.54 192.34 84.90 192.30 85.10 192.39 C85.29 192.48 85.41 192.65 85.52 192.89 C85.62 193.14 85.68 193.52 85.73 193.87 C85.78 194.21 85.81 194.64 85.81 194.95 C85.81 195.25 85.69 195.51 85.73 195.71 C85.77 195.91 85.76 196.06 86.06 196.15 C86.37 196.24 87.06 196.20 87.56 196.26 C88.06 196.31 88.54 196.38 89.07 196.47 C89.61 196.56 90.15 196.70 90.80 196.79 C91.45 196.88 92.23 196.97 92.95 197.02 C93.67 197.06 94.39 197.06 95.11 197.08 C95.83 197.10 96.83 197.05 97.26 197.12 C97.69 197.19 97.68 197.39 97.68 197.50 C97.68 197.62 97.48 197.67 97.26 197.81 C97.05 197.94 96.69 198.14 96.40 198.31 C96.11 198.49 95.82 198.70 95.54 198.86 C95.25 199.01 95.03 199.09 94.67 199.24 C94.32 199.38 93.82 199.58 93.39 199.73 C92.96 199.87 92.59 200.00 92.09 200.11 C91.58 200.21 91.01 200.31 90.36 200.37 C89.72 200.42 88.86 200.42 88.21 200.41 C87.57 200.40 86.92 200.35 86.49 200.32 C86.06 200.29 85.80 200.14 85.62 200.26 C85.45 200.38 85.45 200.68 85.41 201.02 C85.38 201.36 85.38 201.88 85.41 202.31 C85.45 202.75 85.48 203.26 85.62 203.62 C85.77 203.99 85.95 204.20 86.28 204.49 C86.60 204.78 87.10 205.06 87.56 205.36 C88.03 205.66 88.67 206.07 89.07 206.27 C89.48 206.47 89.44 206.35 89.98 206.58 C90.53 206.81 91.65 207.32 92.36 207.66 C93.07 208.00 93.70 208.26 94.25 208.62 C94.80 208.97 95.24 209.33 95.67 209.80 C96.11 210.28 96.46 210.86 96.85 211.48 C97.25 212.09 97.91 212.91 98.03 213.50 C98.15 214.10 97.80 214.60 97.56 215.06 C97.33 215.51 97.00 215.81 96.61 216.24 C96.22 216.68 95.64 217.36 95.20 217.67 C94.77 217.99 94.40 217.91 94.01 218.15 C93.61 218.38 93.34 218.78 92.83 219.10 C92.32 219.42 91.57 219.78 90.94 220.06 C90.30 220.34 89.66 220.56 89.03 220.78 C88.40 221.00 87.73 221.22 87.14 221.37 C86.55 221.53 85.99 221.72 85.47 221.72 C84.96 221.72 84.56 221.53 84.05 221.37 C83.54 221.22 82.84 221.00 82.40 220.78 C81.97 220.56 81.69 220.30 81.45 220.06 C81.21 219.82 81.02 219.57 80.98 219.35 C80.94 219.13 80.97 218.82 81.21 218.74 C81.44 218.66 81.89 218.88 82.40 218.86 C82.92 218.84 83.66 218.79 84.29 218.63 C84.92 218.48 85.55 218.24 86.18 217.92 C86.82 217.60 87.50 217.11 88.09 216.71 C88.68 216.32 89.27 215.96 89.74 215.53 C90.21 215.09 90.46 214.55 90.94 214.10 C91.41 213.64 92.51 213.10 92.59 212.79 C92.66 212.47 92.00 212.45 91.41 212.19 C90.81 211.93 89.74 211.51 89.03 211.23 C88.32 210.96 87.77 210.80 87.14 210.52 C86.51 210.24 85.80 209.94 85.25 209.56 C84.69 209.18 84.22 208.69 83.82 208.25 C83.43 207.81 83.11 207.40 82.87 206.94 C82.63 206.48 82.54 205.99 82.40 205.51 C82.27 205.03 82.18 204.58 82.07 204.05 C81.96 203.52 81.82 202.93 81.75 202.31 C81.68 201.70 81.64 201.09 81.65 200.37 C81.65 199.64 81.73 198.71 81.80 197.99 C81.87 197.27 81.95 196.61 82.07 196.03 C82.19 195.45 82.38 194.99 82.51 194.52 C82.63 194.05 82.71 193.64 82.83 193.21 C82.94 192.78 83.09 192.14 83.22 191.96 Z" fill="#FFB600"/></svg>
<div style="position:absolute;left:258px;top:593px;width:737px;height:37px;box-sizing:border-box;border-radius:4px 4px 0 0;background:linear-gradient(#FFFFFF,#F6F7F8 60%,#ECEDEF);border-bottom:1px solid #9A9A9A"></div>
<svg style="position:absolute;left:268px;top:600px" width="20" height="25"><defs><linearGradient id="pg" x1="0" y1="0" x2="0" y2="1"><stop offset="0" stop-color="#8A8A8A"/><stop offset="1" stop-color="#3E3E3E"/></linearGradient></defs><polygon points="3,4 3,21 16,12.5" fill="url(#pg)"/></svg>
<div style="position:absolute;left:298px;top:598px;width:525px;height:29px;box-sizing:border-box;background:#F6F8FA;border:1px solid #B9BCC0"></div>
<svg style="position:absolute;left:835px;top:604px" width="50" height="16"><polygon points="2,8 9,2.5 9,13.5" fill="#666"/><rect x="10" y="2.5" width="2" height="11" fill="#666"/><rect x="35" y="2.5" width="2" height="11" fill="#666"/><polygon points="38,2.5 45,8 38,13.5" fill="#666"/></svg>
<div class="t" style="left:902px;top:605px;font-size:12px;color:#222;">00:00.00</div>
<svg style="position:absolute;left:963px;top:603px" width="20" height="18"><polygon points="1.5,6 4.5,6 9,2 9,16 4.5,12 1.5,12" fill="#666"/><path d="M11.5 6.5 A3 3 0 0 1 11.5 11.5 M13.5 4.5 A5.5 5.5 0 0 1 13.5 13.5 M15.5 2.5 A8 8 0 0 1 15.5 15.5" fill="none" stroke="#666" stroke-width="1.1"/></svg>
<svg style="position:absolute;left:0;top:0" width="1070" height="702"><path d="M626.5 181 V197" stroke="#8A8A8A" stroke-width="1"/><circle cx="245.6" cy="202.5" r="4.5" fill="#fff" stroke="#8F8F8F" stroke-width="1.6"/><circle cx="626.2" cy="202.5" r="4.5" fill="#fff" stroke="#8F8F8F" stroke-width="1.6"/><circle cx="1006" cy="202.5" r="4.5" fill="#fff" stroke="#8F8F8F" stroke-width="1.6"/><circle cx="245.6" cy="416.5" r="4.5" fill="#fff" stroke="#8F8F8F" stroke-width="1.6"/><circle cx="1006" cy="416.5" r="4.5" fill="#fff" stroke="#8F8F8F" stroke-width="1.6"/><circle cx="245.6" cy="630.5" r="4.5" fill="#fff" stroke="#8F8F8F" stroke-width="1.6"/><circle cx="626.2" cy="630.5" r="4.5" fill="#fff" stroke="#8F8F8F" stroke-width="1.6"/><circle cx="1006" cy="630.5" r="4.5" fill="#fff" stroke="#8F8F8F" stroke-width="1.6"/></svg>
<div style="position:absolute;left:215px;top:203px;width:23px;height:16px;background:#F9CBB3"></div>
<svg style="position:absolute;left:219px;top:204px" width="14" height="14"><polygon points="7,3.5 11.5,3.5 9,6.5 11,6.5 5,12.5 7,8.5 4.5,8.5" fill="#F6D43A" stroke="#8C6A10" stroke-width="0.8" stroke-linejoin="round"/></svg>
<div style="position:absolute;left:1053px;top:156px;width:15px;height:432px;background:#DADADA"></div>
<div style="position:absolute;left:1053px;top:156px;width:15px;height:15px;box-sizing:border-box;background:#fff;border:1px solid #ABABAB"></div>
<div style="position:absolute;left:1053px;top:574px;width:15px;height:15px;box-sizing:border-box;background:#fff;border:1px solid #ABABAB"></div>
<div style="position:absolute;left:1053px;top:367px;width:15px;height:195px;box-sizing:border-box;background:#fff;border:1px solid #ABABAB"></div>
<svg style="position:absolute;left:1053px;top:156px" width="15" height="470"><polygon points="3.5,9 11.5,9 7.5,5" fill="#666"/><polygon points="3.5,424 11.5,424 7.5,428" fill="#666"/><polygon points="4,441 11,441 7.5,437" fill="#777"/><polygon points="4,446 11,446 7.5,442" fill="#777"/><polygon points="4,455 11,455 7.5,459" fill="#777"/><polygon points="4,460 11,460 7.5,464" fill="#777"/></svg>
<div class="t" style="left:182px;top:655px;font-size:14.3px;color:#555;">单击此处添加备注</div>
<div style="position:absolute;left:1px;top:679px;width:1068px;height:22px;background:#F1F1F1"></div>
<div style="position:absolute;left:1px;top:679px;width:1068px;height:1px;background:#D6D6D6"></div>
<div class="t" style="left:9px;top:684px;font-size:12px;color:#666;letter-spacing:0.2px">幻灯片 第 1 张，共 1 张</div>
<svg style="position:absolute;left:158px;top:682px" width="15" height="15"><path d="M1.5 2 H5 L7 3.5 V13 L5 11.5 H1.5 Z M7 3.5 L9 2 H12.5" fill="none" stroke="#777" stroke-width="1"/><path d="M8.5 9 L10 11 L13.5 6" fill="none" stroke="#777" stroke-width="1"/></svg>
<div class="t" style="left:190px;top:683px;font-size:12px;color:#555;">中文(中国)</div>
<svg style="position:absolute;left:584px;top:683px" width="14" height="14"><polygon points="6.5,1 4.2,3.8 8.8,3.8" fill="#555"/><path d="M1.1 6.5 H11.8 M1.1 9.5 H11.8 M1.1 12.5 H7" stroke="#555" stroke-width="1"/></svg>
<div class="t" style="left:600px;top:683px;font-size:12px;color:#444;">备注</div>
<svg style="position:absolute;left:645px;top:683px" width="14" height="14"><path d="M1 1.5 H13 V9.5 H6 L3 12.5 V9.5 H1 Z" fill="#666"/></svg>
<div class="t" style="left:661px;top:683px;font-size:12px;color:#444;">批注</div>
<div style="position:absolute;left:705px;top:679px;width:38px;height:21px;background:#C6C6C6"></div>
<svg style="position:absolute;left:700px;top:680px" width="150" height="20"><rect x="17.5" y="3.5" width="13" height="12" fill="none" stroke="#666" stroke-width="1"/><path d="M20.5 3.5 V15.5 M20.5 12.5 H30.5" stroke="#666" stroke-width="1"/><rect x="22.5" y="6.5" width="6" height="3" fill="none" stroke="#666" stroke-width="1"/><rect x="55.5" y="3.5" width="5" height="5" fill="none" stroke="#666"/><rect x="63.5" y="3.5" width="5" height="5" fill="none" stroke="#666"/><rect x="55.5" y="10.5" width="5" height="5" fill="none" stroke="#666"/><rect x="63.5" y="10.5" width="5" height="5" fill="none" stroke="#666"/><path d="M93.5 3.5 H99.5 L99.5 3.5 H105.5 V14.5 H100.5 L99.5 15.5 L98.5 14.5 H93.5 Z" fill="none" stroke="#707070"/><path d="M99.5 4 V15" stroke="#707070"/><path d="M95 6.5 H104 M95 8.5 H104 M95 10.5 H104 M95 12.5 H104" stroke="#707070" stroke-width="0.9"/><path d="M131.5 5 H143.5" stroke="#707070" stroke-width="1.6"/><path d="M132.5 5 V11.5 H142.5 V5 M134.5 7.5 H140.5 M137.5 11.5 V15 M134.5 15.5 H140.5" fill="none" stroke="#707070"/></svg>
<svg style="position:absolute;left:860px;top:680px" width="200" height="20"><rect x="2" y="9" width="7" height="1.6" fill="#555"/><rect x="12" y="9" width="106" height="1" fill="#999"/><rect x="39" y="4" width="4" height="11" fill="#666"/><path d="M116 9.8 H124 M120 5.8 V13.8" stroke="#555" stroke-width="1.6"/><rect x="178.5" y="6.5" width="12" height="10" fill="none" stroke="#666"/><path d="M180.5 8.5 H182.5 M180.5 8.5 V10.5 M188.5 8.5 H186.5 M188.5 8.5 V10.5 M184.5 11 V15 M183 13.5 L184.5 15 L186 13.5" fill="none" stroke="#666" stroke-width="0.9"/></svg>
<div class="t" style="left:1000px;top:683px;font-size:12px;color:#888;">60%</div>
<svg style="position:absolute;left:905px;top:651px" width="40" height="47" viewBox="0 0 40 47"><polygon points="19.8,2.2 37.2,12.2 37.2,34 19.8,44.4 2.4,34 2.4,12.2" fill="#E85A0E"/><polygon points="2.4,32.3 19.8,42.7 37.2,32.3 37.2,34 19.8,44.4 2.4,34" fill="#B8420A"/><polygon points="11.7,15.9 23.1,12.6 28,14.4 28,30.7 22.8,33.3 11.7,28.9" fill="#fff"/><polygon points="15.7,18.5 21.7,16.4 21.7,29.6 15.7,27.4" fill="#E85A0E"/><polygon points="22.8,13.5 22.8,32.5 21.7,29.6 21.7,16.4" fill="#F8D6C6"/></svg>
<div class="t" style="left:947px;top:656px;font-size:20px;line-height:24px;font-weight:bold;color:#1AA0E6">Office<span style="font-size:19px">教程网</span></div>
<div class="t" style="left:946px;top:677px;font-size:13.5px;font-weight:bold;color:#E8590C">www.office26.com</div>
<div style="position:absolute;left:0;top:0;width:1px;height:702px;background:#B7472A"></div>
<div style="position:absolute;left:1069px;top:0;width:1px;height:702px;background:#B7472A"></div>
<div style="position:absolute;left:0;top:701px;width:1070px;height:1px;background:#B7472A"></div>
</body></html>
